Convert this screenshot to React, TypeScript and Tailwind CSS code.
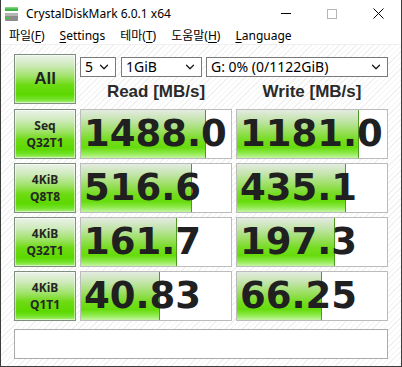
import { ChevronDown } from "lucide-react";

type Row = {
  label: [string, string];
  read: string;
  write: string;
  readBar: number;
  writeBar: number;
};

const rows: Row[] = [
  { label: ["Seq", "Q32T1"], read: "1488.0", write: "1181.0", readBar: 125, writeBar: 122 },
  { label: ["4KiB", "Q8T8"], read: "516.6", write: "435.1", readBar: 111, writeBar: 109 },
  { label: ["4KiB", "Q32T1"], read: "161.7", write: "197.3", readBar: 96, writeBar: 98 },
  { label: ["4KiB", "Q1T1"], read: "40.83", write: "66.25", readBar: 79, writeBar: 85 },
];

const greenButton =
  "border border-[#7f8f7f] bg-[linear-gradient(to_bottom,#ecf2ea_0%,#cdeab9_22%,#9ee266_45%,#6edb14_62%,#5cd800_82%,#74e22a_92%,#aaf07c_100%)] shadow-[inset_0_0_0_1px_rgba(255,255,255,0.5)]";

function Select({ value, width }: { value: string; width: string }) {
  return (
    <div
      className={`${width} h-[20px] flex items-center justify-between border border-[#7a7a7a] bg-white pl-[4px] pr-[4px] text-[14px] leading-none text-black`}
    >
      <span>{value}</span>
      <ChevronDown size={14} strokeWidth={2.2} className="text-[#1a1a1a]" />
    </div>
  );
}

function ValueBox({ value, bar }: { value: string; bar: number }) {
  return (
    <div className="relative h-[50px] border border-[#bcbcbc] bg-white overflow-hidden">
      <div
        className="absolute left-0 top-0 bottom-0 border-r border-[#4f9a22] bg-[linear-gradient(to_bottom,#e4ebe1_0%,#c2e4aa_22%,#98df5c_45%,#76dc22_62%,#66dc0c_78%,#8eea4c_90%,#c4f5a2_100%)]"
        style={{ width: bar }}
      />
      <div className="relative h-full flex items-center pl-[3px] font-['DejaVu_Sans',sans-serif] font-bold text-[37px] leading-none text-[#202020] whitespace-nowrap">
        {value}
      </div>
    </div>
  );
}

function Mnemonic({ pre, ch, post }: { pre: string; ch: string; post: string }) {
  return (
    <span>
      {pre}
      <span className="underline underline-offset-2">{ch}</span>
      {post}
    </span>
  );
}

export default function App() {
  return (
    <div className="w-[402px] h-[367px] flex flex-col border-x border-b border-[#3c3c3c] bg-white font-['Noto_Sans','Noto_Sans_CJK_KR',sans-serif] text-black overflow-hidden">
      {/* title bar */}
      <div className="h-[27px] shrink-0 flex items-center">
        <svg width="16" height="16" viewBox="0 0 16 16" className="ml-[3px] mr-[6px]">
          <rect x="1" y="1" width="13" height="4" fill="#3fb24a" />
          <rect x="1" y="1" width="13" height="1.5" fill="#7fd67f" />
          <rect x="1" y="7" width="13" height="8" rx="1" fill="#8c8c8c" />
          <rect x="1" y="7" width="13" height="3" fill="#b5b5b5" />
          <rect x="2" y="11" width="4" height="2" fill="#4cc24c" />
        </svg>
        <span className="text-[12px]">CrystalDiskMark 6.0.1 x64</span>
        <div className="ml-auto flex items-center h-full">
          <div className="w-[46px] h-full flex items-center justify-center">
            <div className="w-[10px] h-px bg-black" />
          </div>
          <div className="w-[46px] h-full flex items-center justify-center">
            <div className="w-[10px] h-[10px] border border-[#b5b5b5]" />
          </div>
          <div className="w-[46px] h-full flex items-center justify-center">
            <svg width="11" height="11" viewBox="0 0 11 11">
              <path d="M0.5 0.5 L10.5 10.5 M10.5 0.5 L0.5 10.5" stroke="#000" strokeWidth="1" />
            </svg>
          </div>
        </div>
      </div>

      {/* menu bar */}
      <div className="h-[18px] shrink-0 flex items-center gap-[15px] pl-[8px] text-[12px] leading-none border-b border-[#f0f0f0]">
        <Mnemonic pre="파일(" ch="F" post=")" />
        <Mnemonic pre="" ch="S" post="ettings" />
        <Mnemonic pre="테마(" ch="T" post=")" />
        <Mnemonic pre="도움말(" ch="H" post=")" />
        <Mnemonic pre="" ch="L" post="anguage" />
      </div>

      {/* main area */}
      <div className="flex-1 flex flex-col pl-[13px] pt-[9px] bg-[repeating-linear-gradient(135deg,#ffffff_0px,#ffffff_3px,#f1f1f1_3px,#f1f1f1_4px)]">
        <div className="grid grid-cols-[62px_152px_152px] gap-[4px]">
          <div className={`h-[50px] flex items-center justify-center font-['Liberation_Sans',sans-serif] font-bold text-[17px] text-[#222] ${greenButton}`}>
            All
          </div>
          <div className="col-span-2 flex flex-col">
            <div className="mt-[3px] flex items-center">
              <Select value="5" width="w-[36px]" />
              <div className="w-[5px]" />
              <Select value="1GiB" width="w-[81px]" />
              <div className="w-[4px]" />
              <Select value="G: 0% (0/1122GiB)" width="w-[182px]" />
            </div>
            <div className="flex-1 grid grid-cols-2 gap-[4px] items-center font-['Liberation_Sans',sans-serif] font-bold text-[17px] text-[#2a2a2a] text-center pt-[2px]">
              <span>Read [MB/s]</span>
              <span>Write [MB/s]</span>
            </div>
          </div>

          {rows.map((row) => (
            <div key={row.label.join("-") + row.read} className="contents">
              <div
                className={`h-[50px] flex flex-col items-center justify-center font-['Noto_Sans',sans-serif] font-bold text-[12px] leading-[17px] text-[#262626] ${greenButton}`}
              >
                <span className="block">{row.label[0]}</span>
                <span className="block">{row.label[1]}</span>
              </div>
              <ValueBox value={row.read} bar={row.readBar} />
              <ValueBox value={row.write} bar={row.writeBar} />
            </div>
          ))}
        </div>

        <div className="mt-[8px] w-[374px] h-[30px] border border-[#ababab] bg-white" />
      </div>
    </div>
  );
}
